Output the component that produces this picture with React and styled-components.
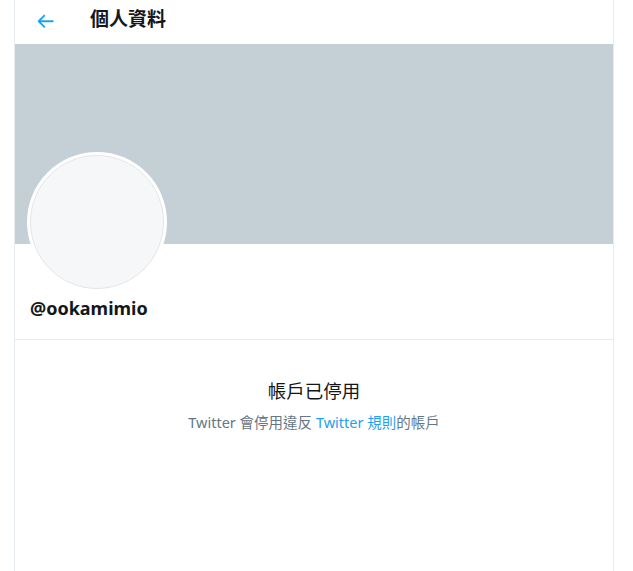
import React from "react";
import styled, { createGlobalStyle } from "styled-components";

const Global = createGlobalStyle`
  html, body { margin: 0; padding: 0; background: #ffffff; }
  body {
    font-family: "Noto Sans", "Noto Sans CJK TC", sans-serif;
    color: #14171a;
    overflow: hidden;
  }
  * { box-sizing: border-box; }
`;

const Page = styled.div`
  display: flex;
  min-height: 100vh;
  padding-left: 14px;
`;

const Column = styled.main`
  width: 600px;
  min-height: 100vh;
  border-left: 1px solid #e6ecf0;
  border-right: 1px solid #e6ecf0;
  display: flex;
  flex-direction: column;
`;

const Header = styled.header`
  height: 44px;
  display: flex;
  align-items: center;
  padding-left: 19px;
`;

const BackButton = styled.button`
  width: 56px;
  height: 36px;
  padding: 0;
  border: none;
  background: none;
  display: flex;
  align-items: center;
  color: #1da1f2;
  cursor: pointer;
  svg { width: 22.5px; height: 22.5px; fill: currentColor; margin-top: -1px; }
`;

const Title = styled.h2`
  margin: 0;
  font-size: 19px;
  font-weight: 700;
  line-height: 24px;
  margin-top: -8px;
  font-family: "Noto Sans CJK TC", sans-serif;
`;

const Banner = styled.div`
  height: 200px;
  background: #c4cfd6;
`;

const ProfileArea = styled.div`
  padding: 0 15px 19px 12px;
  border-bottom: 1px solid #e6ecf0;
`;

const AvatarRing = styled.div`
  width: 140px;
  height: 140px;
  margin-top: -92px;
  border-radius: 50%;
  background: #ffffff;
  padding: 3px;
`;

const AvatarImg = styled.div`
  width: 100%;
  height: 100%;
  border-radius: 50%;
  background: #f5f7f9;
  border: 1px solid #e3e6e8;
`;

const Handle = styled.div`
  margin-top: 4px;
  padding-left: 3px;
  font-size: 18px;
  font-weight: 700;
  line-height: 24px;
  color: #14171a;
`;

const Notice = styled.section`
  display: flex;
  flex-direction: column;
  align-items: center;
  padding-top: 38px;
`;

const NoticeTitle = styled.div`
  font-family: "Noto Sans CJK TC", sans-serif;
  font-size: 18.5px;
  line-height: 24px;
  color: #14171a;
`;

const NoticeText = styled.p`
  margin: 10px 0 0;
  font-size: 14.5px;
  line-height: 20px;
  color: #657786;
`;

const Link = styled.a`
  color: #1da1f2;
  text-decoration: none;
`;

export default function App() {
  return (
    <>
      <Global />
      <Page>
        <Column>
          <Header>
            <BackButton aria-label="返回">
              <svg viewBox="0 0 24 24">
                <path d="M20 11H7.414l4.293-4.293c.39-.39.39-1.023 0-1.414s-1.023-.39-1.414 0l-6 6c-.39.39-.39 1.023 0 1.414l6 6c.195.195.45.293.707.293s.512-.098.707-.293c.39-.39.39-1.023 0-1.414L7.414 13H20c.553 0 1-.447 1-1s-.447-1-1-1z" />
              </svg>
            </BackButton>
            <Title>個人資料</Title>
          </Header>
          <Banner />
          <ProfileArea>
            <AvatarRing>
              <AvatarImg />
            </AvatarRing>
            <Handle>@ookamimio</Handle>
          </ProfileArea>
          <Notice>
            <NoticeTitle>帳戶已停用</NoticeTitle>
            <NoticeText>
              Twitter 會停用違反 <Link href="#">Twitter 規則</Link>的帳戶
            </NoticeText>
          </Notice>
        </Column>
      </Page>
    </>
  );
}
